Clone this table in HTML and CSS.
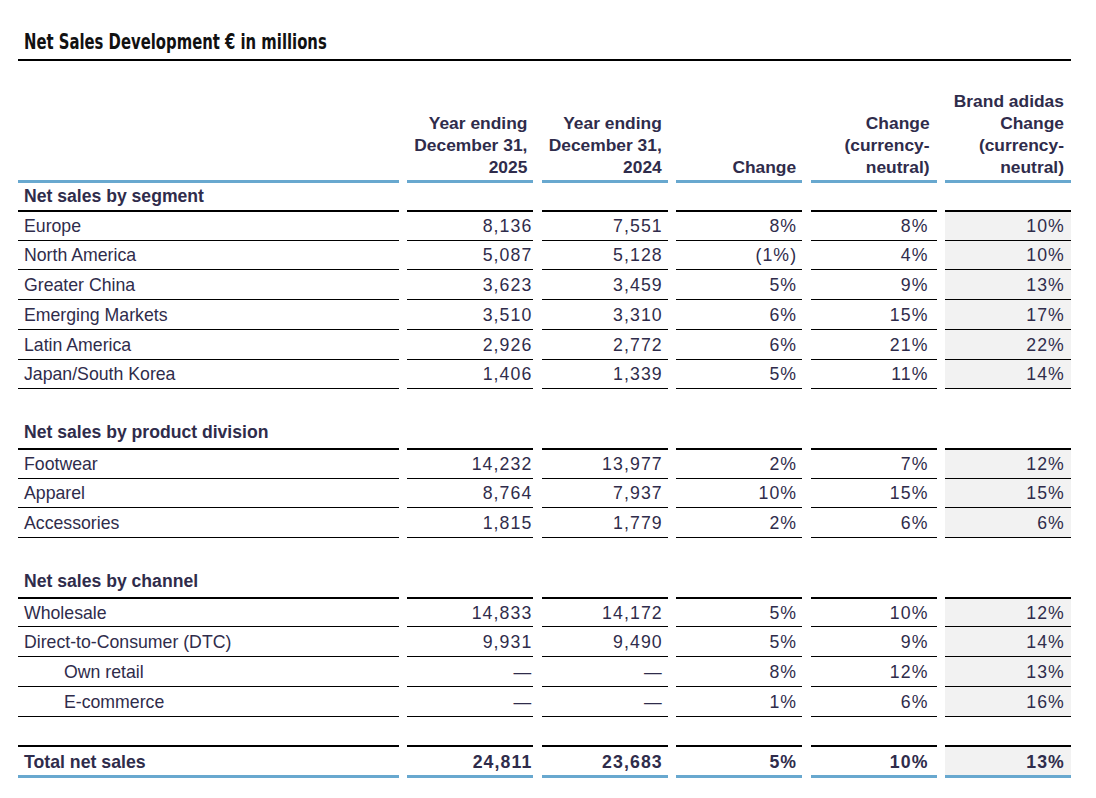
FILE: index.html
```html
<!DOCTYPE html>
<html lang="en">
<head>
<meta charset="utf-8">
<title>Net Sales Development</title>
<link rel="stylesheet" href="styles.css">
</head>
<body>
<div class="page">
  <h1 class="title"><span class="title-text">Net Sales Development € in millions</span></h1>

  <div class="row head">
    <div class="cell"></div>
    <div class="cell c1"><span>Year ending<br>December 31,<br>2025</span></div>
    <div class="cell c2"><span>Year ending<br>December 31,<br>2024</span></div>
    <div class="cell c3"><span>Change</span></div>
    <div class="cell c4"><span>Change<br>(currency-<br>neutral)</span></div>
    <div class="cell c5"><span>Brand adidas<br>Change<br>(currency-<br>neutral)</span></div>
  </div>

  <div class="row section first">
    <div class="cell label">Net sales by segment</div>
    <div class="cell"></div><div class="cell"></div><div class="cell"></div><div class="cell"></div><div class="cell"></div>
  </div>
  <div class="row data thick">
    <div class="cell label">Europe</div>
    <div class="cell num c1">8,136</div><div class="cell num c2">7,551</div><div class="cell num c3">8%</div><div class="cell num c4">8%</div><div class="cell num c5">10%</div>
  </div>
  <div class="row data">
    <div class="cell label">North America</div>
    <div class="cell num c1">5,087</div><div class="cell num c2">5,128</div><div class="cell num c3">(1%)</div><div class="cell num c4">4%</div><div class="cell num c5">10%</div>
  </div>
  <div class="row data">
    <div class="cell label">Greater China</div>
    <div class="cell num c1">3,623</div><div class="cell num c2">3,459</div><div class="cell num c3">5%</div><div class="cell num c4">9%</div><div class="cell num c5">13%</div>
  </div>
  <div class="row data">
    <div class="cell label">Emerging Markets</div>
    <div class="cell num c1">3,510</div><div class="cell num c2">3,310</div><div class="cell num c3">6%</div><div class="cell num c4">15%</div><div class="cell num c5">17%</div>
  </div>
  <div class="row data">
    <div class="cell label">Latin America</div>
    <div class="cell num c1">2,926</div><div class="cell num c2">2,772</div><div class="cell num c3">6%</div><div class="cell num c4">21%</div><div class="cell num c5">22%</div>
  </div>
  <div class="row data">
    <div class="cell label">Japan/South Korea</div>
    <div class="cell num c1">1,406</div><div class="cell num c2">1,339</div><div class="cell num c3">5%</div><div class="cell num c4">11%</div><div class="cell num c5">14%</div>
  </div>
  <div class="row spacer">
    <div class="cell"></div><div class="cell"></div><div class="cell"></div><div class="cell"></div><div class="cell"></div><div class="cell"></div>
  </div>

  <div class="row section">
    <div class="cell label">Net sales by product division</div>
    <div class="cell"></div><div class="cell"></div><div class="cell"></div><div class="cell"></div><div class="cell"></div>
  </div>
  <div class="row data thick">
    <div class="cell label">Footwear</div>
    <div class="cell num c1">14,232</div><div class="cell num c2">13,977</div><div class="cell num c3">2%</div><div class="cell num c4">7%</div><div class="cell num c5">12%</div>
  </div>
  <div class="row data">
    <div class="cell label">Apparel</div>
    <div class="cell num c1">8,764</div><div class="cell num c2">7,937</div><div class="cell num c3">10%</div><div class="cell num c4">15%</div><div class="cell num c5">15%</div>
  </div>
  <div class="row data">
    <div class="cell label">Accessories</div>
    <div class="cell num c1">1,815</div><div class="cell num c2">1,779</div><div class="cell num c3">2%</div><div class="cell num c4">6%</div><div class="cell num c5">6%</div>
  </div>
  <div class="row spacer">
    <div class="cell"></div><div class="cell"></div><div class="cell"></div><div class="cell"></div><div class="cell"></div><div class="cell"></div>
  </div>

  <div class="row section">
    <div class="cell label">Net sales by channel</div>
    <div class="cell"></div><div class="cell"></div><div class="cell"></div><div class="cell"></div><div class="cell"></div>
  </div>
  <div class="row data thick">
    <div class="cell label">Wholesale</div>
    <div class="cell num c1">14,833</div><div class="cell num c2">14,172</div><div class="cell num c3">5%</div><div class="cell num c4">10%</div><div class="cell num c5">12%</div>
  </div>
  <div class="row data">
    <div class="cell label">Direct-to-Consumer (DTC)</div>
    <div class="cell num c1">9,931</div><div class="cell num c2">9,490</div><div class="cell num c3">5%</div><div class="cell num c4">9%</div><div class="cell num c5">14%</div>
  </div>
  <div class="row data">
    <div class="cell label indent">Own retail</div>
    <div class="cell num c1">—</div><div class="cell num c2">—</div><div class="cell num c3">8%</div><div class="cell num c4">12%</div><div class="cell num c5">13%</div>
  </div>
  <div class="row data">
    <div class="cell label indent">E-commerce</div>
    <div class="cell num c1">—</div><div class="cell num c2">—</div><div class="cell num c3">1%</div><div class="cell num c4">6%</div><div class="cell num c5">16%</div>
  </div>
  <div class="row spacer">
    <div class="cell"></div><div class="cell"></div><div class="cell"></div><div class="cell"></div><div class="cell"></div><div class="cell"></div>
  </div>

  <div class="row data thick total">
    <div class="cell label">Total net sales</div>
    <div class="cell num c1">24,811</div><div class="cell num c2">23,683</div><div class="cell num c3">5%</div><div class="cell num c4">10%</div><div class="cell num c5">13%</div>
  </div>
</div>
</body>
</html>
```
FILE: styles.css
```css
* { box-sizing: border-box; }

html, body {
  margin: 0;
  padding: 0;
  background: #ffffff;
}

body {
  font-family: "Liberation Sans", Arial, sans-serif;
  color: #2f2c4b;
}

.page {
  width: 1096px;
  padding: 0 25px 0 18px;
}

.title {
  margin: 27px 0 0 0;
  padding: 0 0 2px 6px;
  height: 34px;
  line-height: 30px;
  font-family: "DejaVu Sans Condensed", "Liberation Sans", sans-serif;
  font-weight: 700;
  font-size: 22px;
  color: #111111;
  border-bottom: 2px solid #000000;
}

.title-text {
  display: inline-block;
  transform: scaleX(0.75);
  transform-origin: left center;
  white-space: nowrap;
}

.row {
  display: grid;
  grid-template-columns: 381px repeat(5, 126px);
  column-gap: 8.4px;
}

.cell {
  height: 29.75px;
  display: flex;
  align-items: center;
  justify-content: flex-end;
  white-space: nowrap;
}

/* header */
.head .cell {
  height: 122px;
  align-items: flex-end;
  padding-bottom: 2px;
  padding-right: 6px;
  border-bottom: 3px solid #68a8cf;
  font-weight: 700;
  font-size: 17.4px;
  line-height: 22px;
  text-align: right;
}
.head .c4, .head .c5 { padding-right: 7px; }

/* section header */
.section .cell { border-top: 0; }
.section.first .cell { height: 26.75px; }
.section .label {
  font-weight: 700;
  font-size: 17.6px;
}

.label {
  justify-content: flex-start;
  padding-left: 6px;
  font-size: 17.7px;
}
.label.indent { padding-left: 46px; }

.data .cell { border-top: 1px solid #000000; padding-top: 2px; }
.data.thick .cell { border-top: 2px solid #000000; }
.spacer .cell { border-top: 1px solid #000000; }

.num {
  font-size: 17.7px;
  letter-spacing: 1.1px;
}
.num.c1 { padding-right: 1px; }
.num.c2 { padding-right: 5px; }
.num.c3 { padding-right: 5px; }
.num.c4 { padding-right: 8px; }
.num.c5 { padding-right: 6px; }
.data .c5 { background: #f2f2f2; }

.total .cell {
  height: 32.75px;
  border-bottom: 3px solid #68a8cf;
  font-weight: 700;
}
```
